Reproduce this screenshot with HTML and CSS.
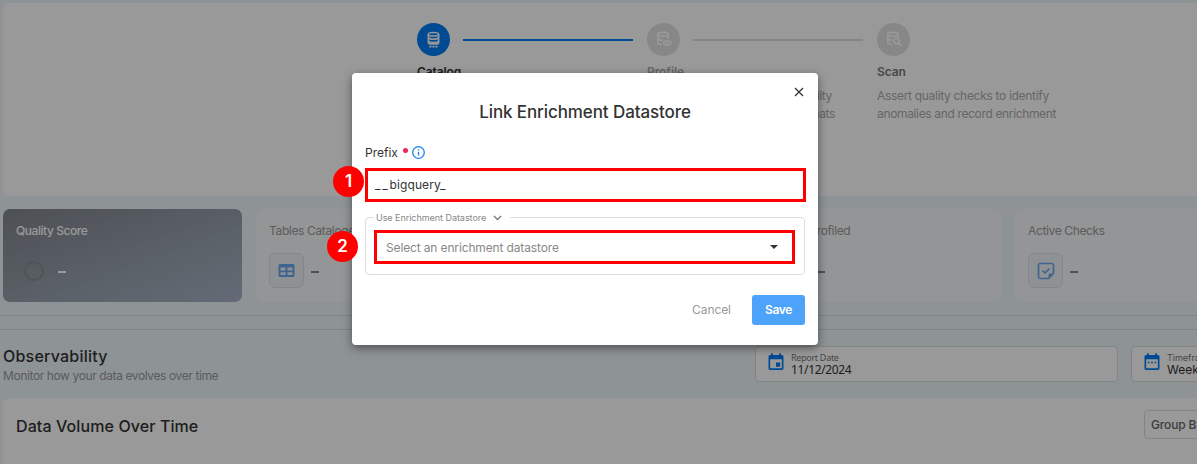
FILE: index.html
```html
<!DOCTYPE html>
<html lang="en">
<head>
<meta charset="utf-8">
<title>Link Enrichment Datastore</title>
<link rel="stylesheet" href="styles.css">
</head>
<body>
<main class="page">
  <section class="panel steps">
    <div class="step">
      <div class="step-head">
        <span class="step-icon active"><svg width="17" height="18" viewBox="0 0 17 18" fill="none" stroke="#fff" stroke-width="1.5"><ellipse cx="8.5" cy="3.3" rx="5.2" ry="1.8"/><path d="M3.300 3.300v8.500q0 1.200 1.500 1.200h7.400q1.500 0 1.500-1.200V3.300M3.300 6.500q1 1.700 5.200 1.700t5.200-1.700M3.300 10q1 1.500 5.200 1.500t5.200-1.500"/><path stroke-width="1.800" d="M4.400 15.600h8.200" stroke-dasharray="2.100 .9"/></svg></span>
        <span class="step-line active"></span>
      </div>
      <h3 class="strong">Catalog</h3>
    </div>
    <div class="step">
      <div class="step-head">
        <span class="step-icon"><svg width="17" height="18" viewBox="0 0 17 18" fill="none" stroke="currentColor" stroke-width="1.600"><ellipse cx="8" cy="3.300" rx="5.200" ry="1.900"/><path d="M2.800 3.300v8.500q0 1.600 4.200 1.700M13.200 3.300V8M2.800 7.500q1 1.800 5.500 1.700"/><ellipse cx="12.300" cy="12" rx="3.700" ry="2.200"/><circle cx="12.300" cy="12" r=".4"/></svg></span>
        <span class="step-line"></span>
      </div>
      <h3 class="faded">Profile</h3>
      <p class="infer"><span>Infer fields and data quality</span><span>checks and detect formats</span></p>
    </div>
    <div class="step">
      <div class="step-head">
        <span class="step-icon"><svg width="17" height="18" viewBox="0 0 17 18" fill="none" stroke="currentColor" stroke-width="1.600"><ellipse cx="8" cy="3.300" rx="5.200" ry="1.900"/><path d="M2.800 3.300v8.500q0 1.600 4.500 1.700M13.200 3.300V6.500M2.800 7.500q1 1.600 4 1.700"/><circle cx="11.500" cy="10" r="2.700"/><path d="M13.500 12l3 3"/></svg></span>
      </div>
      <h3>Scan</h3>
      <p><span class="assert">Assert quality checks to identify</span><span class="anomalies">anomalies and record enrichment</span></p>
    </div>
  </section>

  <section class="stats">
    <article class="stat score">
      <h4>Quality Score</h4>
      <div class="stat-row"><span class="ring"></span><i class="dash"></i></div>
    </article>
    <article class="stat">
      <h4>Tables Cataloged</h4>
      <div class="stat-row"><span class="tile"><svg width="18" height="16" viewBox="0 0 18 16"><path fill="#6aa9ee" fill-rule="evenodd" d="M2 1h13a1.500 1.500 0 0 1 1.500 1.500v10A1.500 1.500 0 0 1 15 14H2a1.500 1.500 0 0 1-1.500-1.500v-10A1.500 1.500 0 0 1 2 1zm.5 3.500v3h5v-3zm7 0v3h5v-3zm-7 4.700v2.800h5V9.200zm7 0v2.800h5V9.200z"/></svg></span><i class="dash"></i></div>
    </article>
    <article class="stat">
      <h4>Records Found</h4>
      <div class="stat-row"><span class="tile"></span><i class="dash"></i></div>
    </article>
    <article class="stat">
      <h4>Fields Profiled</h4>
      <div class="stat-row"><span class="tile"></span><i class="dash"></i></div>
    </article>
    <article class="stat">
      <h4>Active Checks</h4>
      <div class="stat-row"><span class="tile"><svg width="18" height="18" viewBox="0 0 18 18" fill="none" stroke="#6aa9ee" stroke-width="1.700"><path d="M11.500 16.500H3.200a1.700 1.700 0 0 1-1.700-1.700V3.200a1.700 1.700 0 0 1 1.700-1.700h11.600a1.700 1.700 0 0 1 1.700 1.700v8.300zM5.500 8.700l2.500 2.200L12.500 6.700"/><path fill="#6aa9ee" stroke="none" d="M11.500 17v-3.700a1.800 1.800 0 0 1 1.800-1.800H17z"/></svg></span><i class="dash"></i></div>
    </article>
  </section>

  <div class="divider"></div>

  <section class="observe">
    <div class="observe-title">
      <h2>Observability</h2>
      <p>Monitor how your data evolves over time</p>
    </div>
    <div class="picker date">
      <svg width="24" height="24" viewBox="0 0 24 24" fill="#007bf5"><path d="M17 12h-5v5h5v-5zM16 1v2H8V1H6v2H5c-1.110 0-1.990.9-1.990 2L3 19c0 1.100.89 2 2 2h14c1.100 0 2-.9 2-2V5c0-1.100-.9-2-2-2h-1V1h-2zm3 18H5V8h14v11z"/></svg>
      <div><small>Report Date</small><b>11/12/2024</b></div>
    </div>
    <div class="picker frame">
      <svg width="24" height="24" viewBox="0 0 24 24" fill="#007bf5"><path d="M9 11H7v2h2v-2zm4 0h-2v2h2v-2zm4 0h-2v2h2v-2zm2-8h-1V1h-2v2H8V1H6v2H5c-1.110 0-1.990.9-1.990 2L3 19c0 1.100.89 2 2 2h14c1.100 0 2-.9 2-2V5c0-1.100-.9-2-2-2zm0 16H5V8h14v11z"/></svg>
      <div><small>Timeframe</small><b>Week</b></div>
    </div>
  </section>

  <section class="panel volume">
    <h2>Data Volume Over Time</h2>
    <span class="group">Group By</span>
  </section>
</main>

<div class="scrim">
  <div class="modal" role="dialog">
    <div class="modal-top"><svg class="close" width="10" height="10" viewBox="0 0 10 10" stroke="#333" stroke-width="1.300"><path d="M1 1l8 8M9 1L1 9"/></svg></div>
    <h1>Link Enrichment Datastore</h1>
    <label class="prefix"><span>Prefix</span><i class="required"></i><svg width="13" height="13" viewBox="0 0 13 13" fill="none" stroke="#1a82ee" stroke-width="1.300"><circle cx="6.500" cy="6.500" r="5.800"/><path d="M6.500 5.700v3.800M6.500 3.300v1.300"/></svg></label>
    <div class="field marked"><span class="prefix-value"><span class="lead">__</span>bigquery_</span><em class="badge one">1</em></div>
    <fieldset>
      <legend><span>Use Enrichment Datastore</span><svg width="9" height="6" viewBox="0 0 9 6" fill="none" stroke="#777" stroke-width="1.300"><path d="M1 1l3.500 3.500L8 1"/></svg></legend>
      <div class="select marked"><span>Select an enrichment datastore</span><i class="caret"></i><em class="badge two">2</em></div>
    </fieldset>
    <div class="actions"><button class="cancel">Cancel</button><button class="save">Save</button></div>
  </div>
</div>
</body>
</html>
```
FILE: styles.css
```css
* { box-sizing: border-box; }
body { margin: 0; width: 1197px; height: 464px; overflow: hidden; background: #edf5fa; font-family: Inter, "Open Sans", sans-serif; color: #333; }
h1, h2, h3, h4, p { margin: 0; font-weight: 400; white-space: nowrap; }
i, em { font-style: normal; }
.page { height: 464px; padding: 3px 0 0 3px; overflow: hidden; }
.panel { background: #fff; border-radius: 7px 0 0 7px; }

/* onboarding steps */
.steps { height: 193px; padding: 20px 0 0 414px; display: flex; }
.step { width: 230px; flex: none; }
.step-head { display: flex; align-items: center; gap: 13px; height: 33px; }
.step-icon { width: 33px; height: 33px; border-radius: 50%; background: #e2e2e2; color: #fff; display: flex; align-items: center; justify-content: center; }
.step-icon.active, .step-line.active { background: #007bf5; }
.step-line { width: 170px; height: 2px; background: #ddd; }
.step h3 { font-size: 12px; font-weight: 600; line-height: 16px; margin-top: 8px; letter-spacing: -.1px; color: #777; }
.step h3.strong { color: #333; }
.step h3.faded { color: #aaa; }
.step p { margin-top: 7px; font-size: 12px; line-height: 18px; letter-spacing: -.35px; color: #aaa; }
.step p span { display: block; width: max-content; }
.step .infer span { width: 188px; text-align: right; }
.step .infer span:first-child { padding-right: 3px; }
.step p .assert { letter-spacing: -.31px; }

/* summary cards */
.stats { display: grid; grid-template-columns: repeat(5, 239px); gap: 14px; margin-top: 13px; height: 93px; }
.stat { border-radius: 7px; background: #f6f8fa; padding: 13px; }
.stat h4 { font-size: 12px; line-height: 17px; letter-spacing: -.36px; color: #999; }
.stat-row { display: flex; align-items: center; margin-top: 14px; height: 35px; }
.tile { width: 35px; height: 35px; border: 1px solid #dde2e6; border-radius: 6px; background: #edf3f8; display: flex; align-items: center; justify-content: center; }
.dash { width: 8px; height: 2px; margin: 2px 0 0 7px; background: #888; }
.score { background: linear-gradient(160deg, #81868f, #98a3ae 60%, #a8b2c6); }
.score h4 { color: #fff; font-weight: 500; letter-spacing: -.45px; }
.ring { width: 20px; height: 20px; margin-left: 8px; border: 2px solid #888b90; border-radius: 50%; }
.score .dash { margin-left: 14px; background: #fff; }
.divider { height: 15px; margin: 13px 0 0 -3px; border: solid #d5dce2; border-width: 1px 0; }

/* observability header */
.observe { display: flex; height: 68px; padding-top: 16px; }
.observe-title { width: 752px; flex: none; }
.observe h2 { font-size: 16px; line-height: 20px; font-weight: 500; letter-spacing: .22px; }
.observe p { font-size: 12px; line-height: 20px; letter-spacing: -.39px; color: #999; }
.picker { flex: none; height: 36px; border: 1px solid #ddd; border-radius: 4px; background: #fff; display: flex; padding: 5px 0 0 10px; }
.picker svg { width: 20px; height: 21px; margin-top: 0; }
.date { width: 363px; margin-right: 13px; }
.frame { width: 220px; }
.picker div { margin-left: 5px; }
.picker small { display: block; font: 9px/12px "Noto Sans", sans-serif; letter-spacing: -.3px; color: #777; }
.picker b { display: block; font: 12px/12px "Noto Sans", sans-serif; letter-spacing: -.35px; color: #333; }
.frame b, .frame small { font-family: Inter, sans-serif; letter-spacing: 0; }
.volume { height: 100px; padding: 12px 0 0 13px; display: flex; }
.volume h2 { width: 1128px; flex: none; padding-top: 5px; font-size: 16px; line-height: 22px; font-weight: 500; letter-spacing: .1px; }
.group { flex: none; width: 100px; height: 29px; padding-left: 6px; border: 1px solid #ddd; border-radius: 4px; font-size: 12px; line-height: 27px; letter-spacing: -.15px; color: #666; font-weight: 500; }

/* dialog */
.scrim { position: absolute; inset: 0; background: rgba(0, 0, 0, .4); padding: 73px 0 0 352px; }
.modal { width: 466px; height: 272px; padding: 0 13px; background: #fff; border-radius: 4px; box-shadow: 0 3px 10px rgba(0, 0, 0, .45); display: flex; flex-direction: column; }
.modal-top { height: 28px; padding: 14px 1px 0; text-align: right; line-height: 0; }
h1 { font-size: 17px; line-height: 22px; font-weight: 450; letter-spacing: -.1px; text-align: center; }
.prefix { display: flex; align-items: center; height: 16px; margin-top: 21px; font-size: 12px; }
.required { width: 5px; height: 5px; margin: -4px 4px 0 5px; border-radius: 50%; background: #f0225f; }
.marked { position: relative; border: 3px solid #f00; display: flex; align-items: center; font-size: 12px; }
.field { width: 441px; height: 34px; margin-top: 8px; padding: 0 0 2px 7px; }
.prefix-value { letter-spacing: .1px; }
.lead { letter-spacing: 1.8px; }
.badge { position: absolute; width: 31px; height: 31px; border-radius: 50%; background: #f00; color: #fff; font: 600 17px/31px Inter, sans-serif; text-align: center; }
.one { left: -35px; top: -5px; }
.two { left: -50px; top: -2px; }
fieldset { margin: 10px 0 0; padding: 8px 0 0 8px; width: 440px; height: 63px; border: 1px solid #ddd; border-radius: 4px; min-width: 0; }
legend { height: 10px; padding: 2px 8px 0 2px; font-size: 9px; line-height: 10px; letter-spacing: -.04px; color: #888; display: flex; align-items: center; gap: 7px; }
.select { width: 421px; height: 34px; padding: 0 14px 0 9px; justify-content: space-between; letter-spacing: -.14px; color: #888; }
.caret { border: solid transparent; border-width: 4px 4px 0; border-top-color: #333; }
.actions { display: flex; justify-content: flex-end; margin-top: 20px; height: 30px; }
button { border: 0; padding: 0 0 1px; background: none; font: 12px Inter, sans-serif; letter-spacing: -.1px; color: #999; }
.cancel { width: 81px; }
.save { width: 53px; border-radius: 3px; background: #4da3f9; color: #fff; font-weight: 600; letter-spacing: -.3px; }
```
